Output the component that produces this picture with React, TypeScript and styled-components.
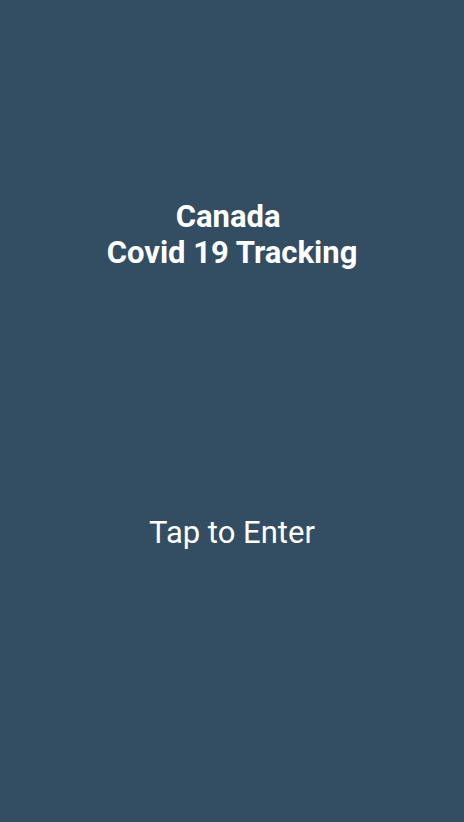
import React from "react";
import styled, { createGlobalStyle } from "styled-components";

const GlobalStyle = createGlobalStyle`
    html, body {
        margin: 0;
        padding: 0;
        background: #334d63;
    }
    body {
        font-family: Roboto, "Liberation Sans", sans-serif;
    }
`;

const Screen = styled.div`
    display: flex;
    flex-direction: column;
    align-items: center;
    width: 100%;
    height: 822px;
    background: #334d63;
    color: #ffffff;
    box-sizing: border-box;
    padding-top: 199px;
`;

const Title = styled.h1`
    margin: 0;
    font-size: 31px;
    font-weight: 700;
    line-height: 36px;
    text-align: center;
    white-space: pre;
`;

const EnterButton = styled.div`
    margin-top: 242px;
    font-size: 31px;
    font-weight: 400;
    line-height: 40px;
    cursor: pointer;
`;

const App: React.FC = () => {
    return (
        <>
            <GlobalStyle />
            <Screen>
                <Title>{"Canada \nCovid 19 Tracking"}</Title>
                <EnterButton>Tap to Enter</EnterButton>
            </Screen>
        </>
    );
};

export default App;
